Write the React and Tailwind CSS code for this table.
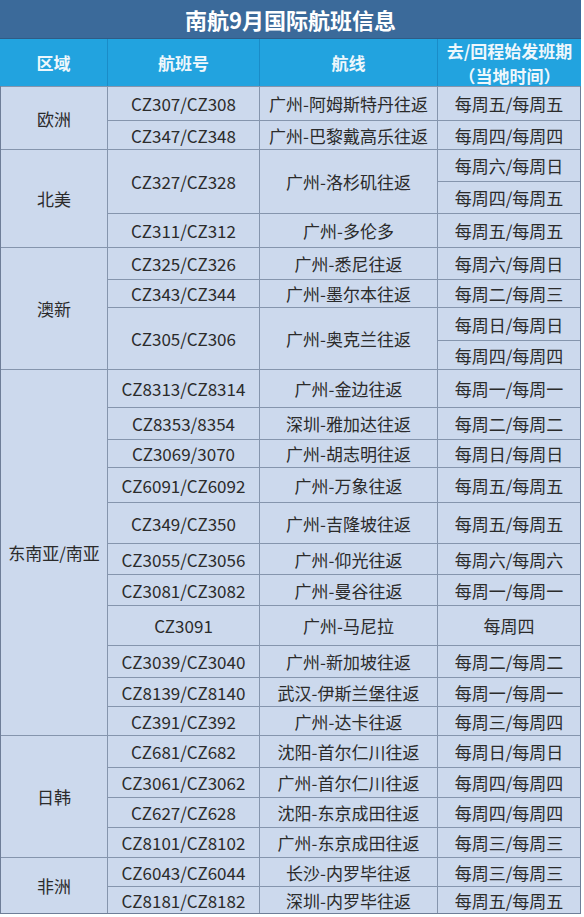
import React from "react";

const groups = [
  {
    name: "欧洲",
    flights: [
      { no: "CZ307/CZ308", route: "广州-阿姆斯特丹往返", dates: [["每周五/每周五", "h-[33px]"]] },
      { no: "CZ347/CZ348", route: "广州-巴黎戴高乐往返", dates: [["每周四/每周四", "h-[28px]"]] },
    ],
  },
  {
    name: "北美",
    flights: [
      { no: "CZ327/CZ328", route: "广州-洛杉矶往返", dates: [["每周六/每周日", "h-[31px]"], ["每周四/每周五", "h-[31px]"]] },
      { no: "CZ311/CZ312", route: "广州-多伦多", dates: [["每周五/每周五", "h-[33px]"]] },
    ],
  },
  {
    name: "澳新",
    flights: [
      { no: "CZ325/CZ326", route: "广州-悉尼往返", dates: [["每周六/每周日", "h-[31px]"]] },
      { no: "CZ343/CZ344", route: "广州-墨尔本往返", dates: [["每周二/每周三", "h-[27px]"]] },
      { no: "CZ305/CZ306", route: "广州-奥克兰往返", dates: [["每周日/每周日", "h-[32px]"], ["每周四/每周四", "h-[28px]"]] },
    ],
  },
  {
    name: "东南亚/南亚",
    flights: [
      { no: "CZ8313/CZ8314", route: "广州-金边往返", dates: [["每周一/每周一", "h-[37px]"]] },
      { no: "CZ8353/8354", route: "深圳-雅加达往返", dates: [["每周二/每周二", "h-[31px]"]] },
      { no: "CZ3069/3070", route: "广州-胡志明往返", dates: [["每周日/每周日", "h-[27px]"]] },
      { no: "CZ6091/CZ6092", route: "广州-万象往返", dates: [["每周五/每周五", "h-[34px]"]] },
      { no: "CZ349/CZ350", route: "广州-吉隆坡往返", dates: [["每周五/每周五", "h-[40px]"]] },
      { no: "CZ3055/CZ3056", route: "广州-仰光往返", dates: [["每周六/每周六", "h-[30px]"]] },
      { no: "CZ3081/CZ3082", route: "广州-曼谷往返", dates: [["每周一/每周一", "h-[30px]"]] },
      { no: "CZ3091", route: "广州-马尼拉", dates: [["每周四", "h-[39px]"]] },
      { no: "CZ3039/CZ3040", route: "广州-新加坡往返", dates: [["每周二/每周二", "h-[31px]"]] },
      { no: "CZ8139/CZ8140", route: "武汉-伊斯兰堡往返", dates: [["每周一/每周一", "h-[28px]"]] },
      { no: "CZ391/CZ392", route: "广州-达卡往返", dates: [["每周三/每周四", "h-[28px]"]] },
    ],
  },
  {
    name: "日韩",
    flights: [
      { no: "CZ681/CZ682", route: "沈阳-首尔仁川往返", dates: [["每周日/每周日", "h-[31px]"]] },
      { no: "CZ3061/CZ3062", route: "广州-首尔仁川往返", dates: [["每周四/每周四", "h-[29px]"]] },
      { no: "CZ627/CZ628", route: "沈阳-东京成田往返", dates: [["每周四/每周四", "h-[29px]"]] },
      { no: "CZ8101/CZ8102", route: "广州-东京成田往返", dates: [["每周三/每周三", "h-[29px]"]] },
    ],
  },
  {
    name: "非洲",
    flights: [
      { no: "CZ6043/CZ6044", route: "长沙-内罗毕往返", dates: [["每周三/每周三", "h-[28px]"]] },
      { no: "CZ8181/CZ8182", route: "深圳-内罗毕往返", dates: [["每周五/每周五", "h-[26px]"]] },
    ],
  },
];

const cell =
  "bg-[#ccd9ed] flex items-center justify-center text-[17px] leading-none text-[#2b2b2b] whitespace-nowrap";

const headCell =
  "bg-[#22a3df] flex items-center justify-center text-[#eef7fc] font-bold text-[17px] leading-none";

export default function App() {
  return (
    <div className="w-[584px] min-h-[917px] bg-white font-['Noto_Sans_CJK_SC','Noto_Sans',sans-serif]">
      <div className="w-[581px]">
        <div className="h-[38px] bg-[#3b6a9a] flex items-center justify-center text-white font-bold text-[22px] leading-none">
          南航9月国际航班信息
        </div>
        <div className="flex gap-px bg-[#1a8cc8] h-[48px] border-t border-[#2f5c86]">
          <div className={`${headCell} w-[107px]`}>区域</div>
          <div className={`${headCell} w-[151px]`}>航班号</div>
          <div className={`${headCell} w-[177px]`}>航线</div>
          <div className="bg-[#22a3df] w-[143px] flex flex-col items-center justify-center gap-[6px] text-[#eef7fc] font-bold text-[17px] leading-[19px]">
            <span className="block">去/回程始发班期</span>
            <span className="block">（当地时间）</span>
          </div>
        </div>
        <div className="flex flex-col gap-px bg-[#8595ad] border border-t-0 border-[#6e7e98] pt-px">
          {groups.map((g) => (
            <div key={g.name} className="flex gap-px">
              <div className={`${cell} w-[106px]`}>{g.name}</div>
              <div className="flex flex-col gap-px w-[472px]">
                {g.flights.map((f) => (
                  <div key={f.no} className="flex gap-px">
                    <div className={`${cell} w-[151px]`}>{f.no}</div>
                    <div className={`${cell} w-[177px]`}>{f.route}</div>
                    <div className="flex flex-col gap-px w-[142px]">
                      {f.dates.map(([d, h]) => (
                        <div key={d + h} className={`${cell} ${h}`}>
                          {d}
                        </div>
                      ))}
                    </div>
                  </div>
                ))}
              </div>
            </div>
          ))}
        </div>
      </div>
    </div>
  );
}
